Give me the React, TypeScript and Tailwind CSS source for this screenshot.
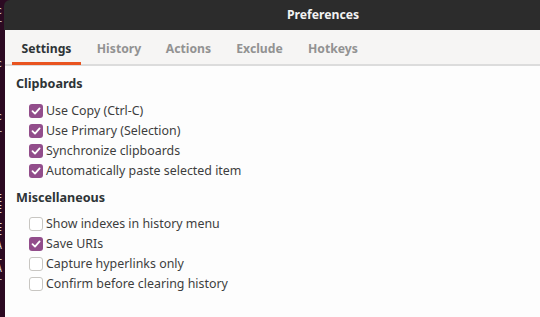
import React from "react";

const Check = ({ checked }: { checked: boolean }) =>
  checked ? (
    <div className="w-[14px] h-[14px] rounded-[3px] bg-[#924d8b] flex items-center justify-center shrink-0">
      <svg width="10" height="10" viewBox="0 0 10 10">
        <path d="M1.5 5.2 L4 7.6 L8.6 2.4" fill="none" stroke="#ffffff" strokeWidth="1.8" strokeLinecap="round" strokeLinejoin="round" />
      </svg>
    </div>
  ) : (
    <div className="w-[14px] h-[14px] rounded-[3px] bg-white border border-[#c8c6c2] shrink-0" />
  );

const Row = ({ label, checked }: { label: string; checked: boolean }) => (
  <div className="h-[20px] flex items-center pl-[13px]">
    <Check checked={checked} />
    <span className="ml-[3px] text-[12.4px] text-[#3d3d3d]">{label}</span>
  </div>
);

const tabs = [
  { name: "Settings", w: "w-[69px]" },
  { name: "History", w: "w-[62px]" },
  { name: "Actions", w: "w-[63px]" },
  { name: "Exclude", w: "w-[65px]" },
  { name: "Hotkeys", w: "w-[68px]" },
];

const stripLetters = [
  { t: "c", y: 6 },
  { t: "r", y: 19 },
  { t: "c", y: 59 },
  { t: "c", y: 112 },
  { t: "r", y: 129 },
  { t: "E", y: 194 },
  { t: "E", y: 205 },
  { t: "L", y: 216 },
  { t: "E", y: 227 },
  { t: "A", y: 241 },
  { t: "L", y: 252 },
  { t: "A", y: 264 },
  { t: "r", y: 277 },
];

export default function App() {
  return (
    <div
      className="w-[540px] h-[317px] overflow-hidden flex bg-[#2c0a22]"
      style={{ fontFamily: '"Noto Sans", "DejaVu Sans", sans-serif' }}
    >
      <div className="w-[4px] h-full relative overflow-hidden shrink-0">
        {stripLetters.map((l, i) => (
          <span
            key={i}
            className="absolute left-[-4px] text-[10px] leading-[10px] text-[#d8d0d4]"
            style={{ top: l.y, fontFamily: '"DejaVu Sans Mono", monospace' }}
          >
            {l.t}
          </span>
        ))}
      </div>
      <div className="w-[638px] shrink-0 flex flex-col">
        <div className="h-[30px] bg-[#2c2c2c] flex items-center justify-center rounded-tl-[6px]">
          <span className="text-[12.2px] font-bold text-[#f2f2f2]">Preferences</span>
        </div>
        <div className="flex-1 flex flex-col bg-[#fdfdfd] ml-[1px]">
          <div className="h-[36px] bg-[#f6f5f4] border-b-2 border-[#dcdcdc] flex items-stretch pl-[7px] gap-[7px]">
            {tabs.map((t, i) => (
              <div
                key={t.name}
                className={`${t.w} relative flex items-center justify-center text-[12.2px] font-bold ${
                  i === 0 ? "text-[#2e3436]" : "text-[#929292]"
                }`}
              >
                <span className="mt-[4px]">{t.name}</span>
                {i === 0 && (
                  <div className="absolute left-0 right-0 bottom-[-1px] h-[3px] bg-[#e95420]" />
                )}
              </div>
            ))}
          </div>
          <div className="pl-[11px] pt-[8px]">
            <div className="h-[20px] flex items-center text-[12.6px] font-bold text-[#2e3436]">Clipboards</div>
            <div className="mt-[7px]">
              <Row label="Use Copy (Ctrl-C)" checked />
              <Row label="Use Primary (Selection)" checked />
              <Row label="Synchronize clipboards" checked />
              <Row label="Automatically paste selected item" checked />
            </div>
            <div className="h-[20px] mt-[7px] flex items-center text-[12.6px] font-bold text-[#2e3436]">Miscellaneous</div>
            <div className="mt-[6px]">
              <Row label="Show indexes in history menu" checked={false} />
              <Row label="Save URIs" checked />
              <Row label="Capture hyperlinks only" checked={false} />
              <Row label="Confirm before clearing history" checked={false} />
            </div>
          </div>
        </div>
      </div>
    </div>
  );
}
